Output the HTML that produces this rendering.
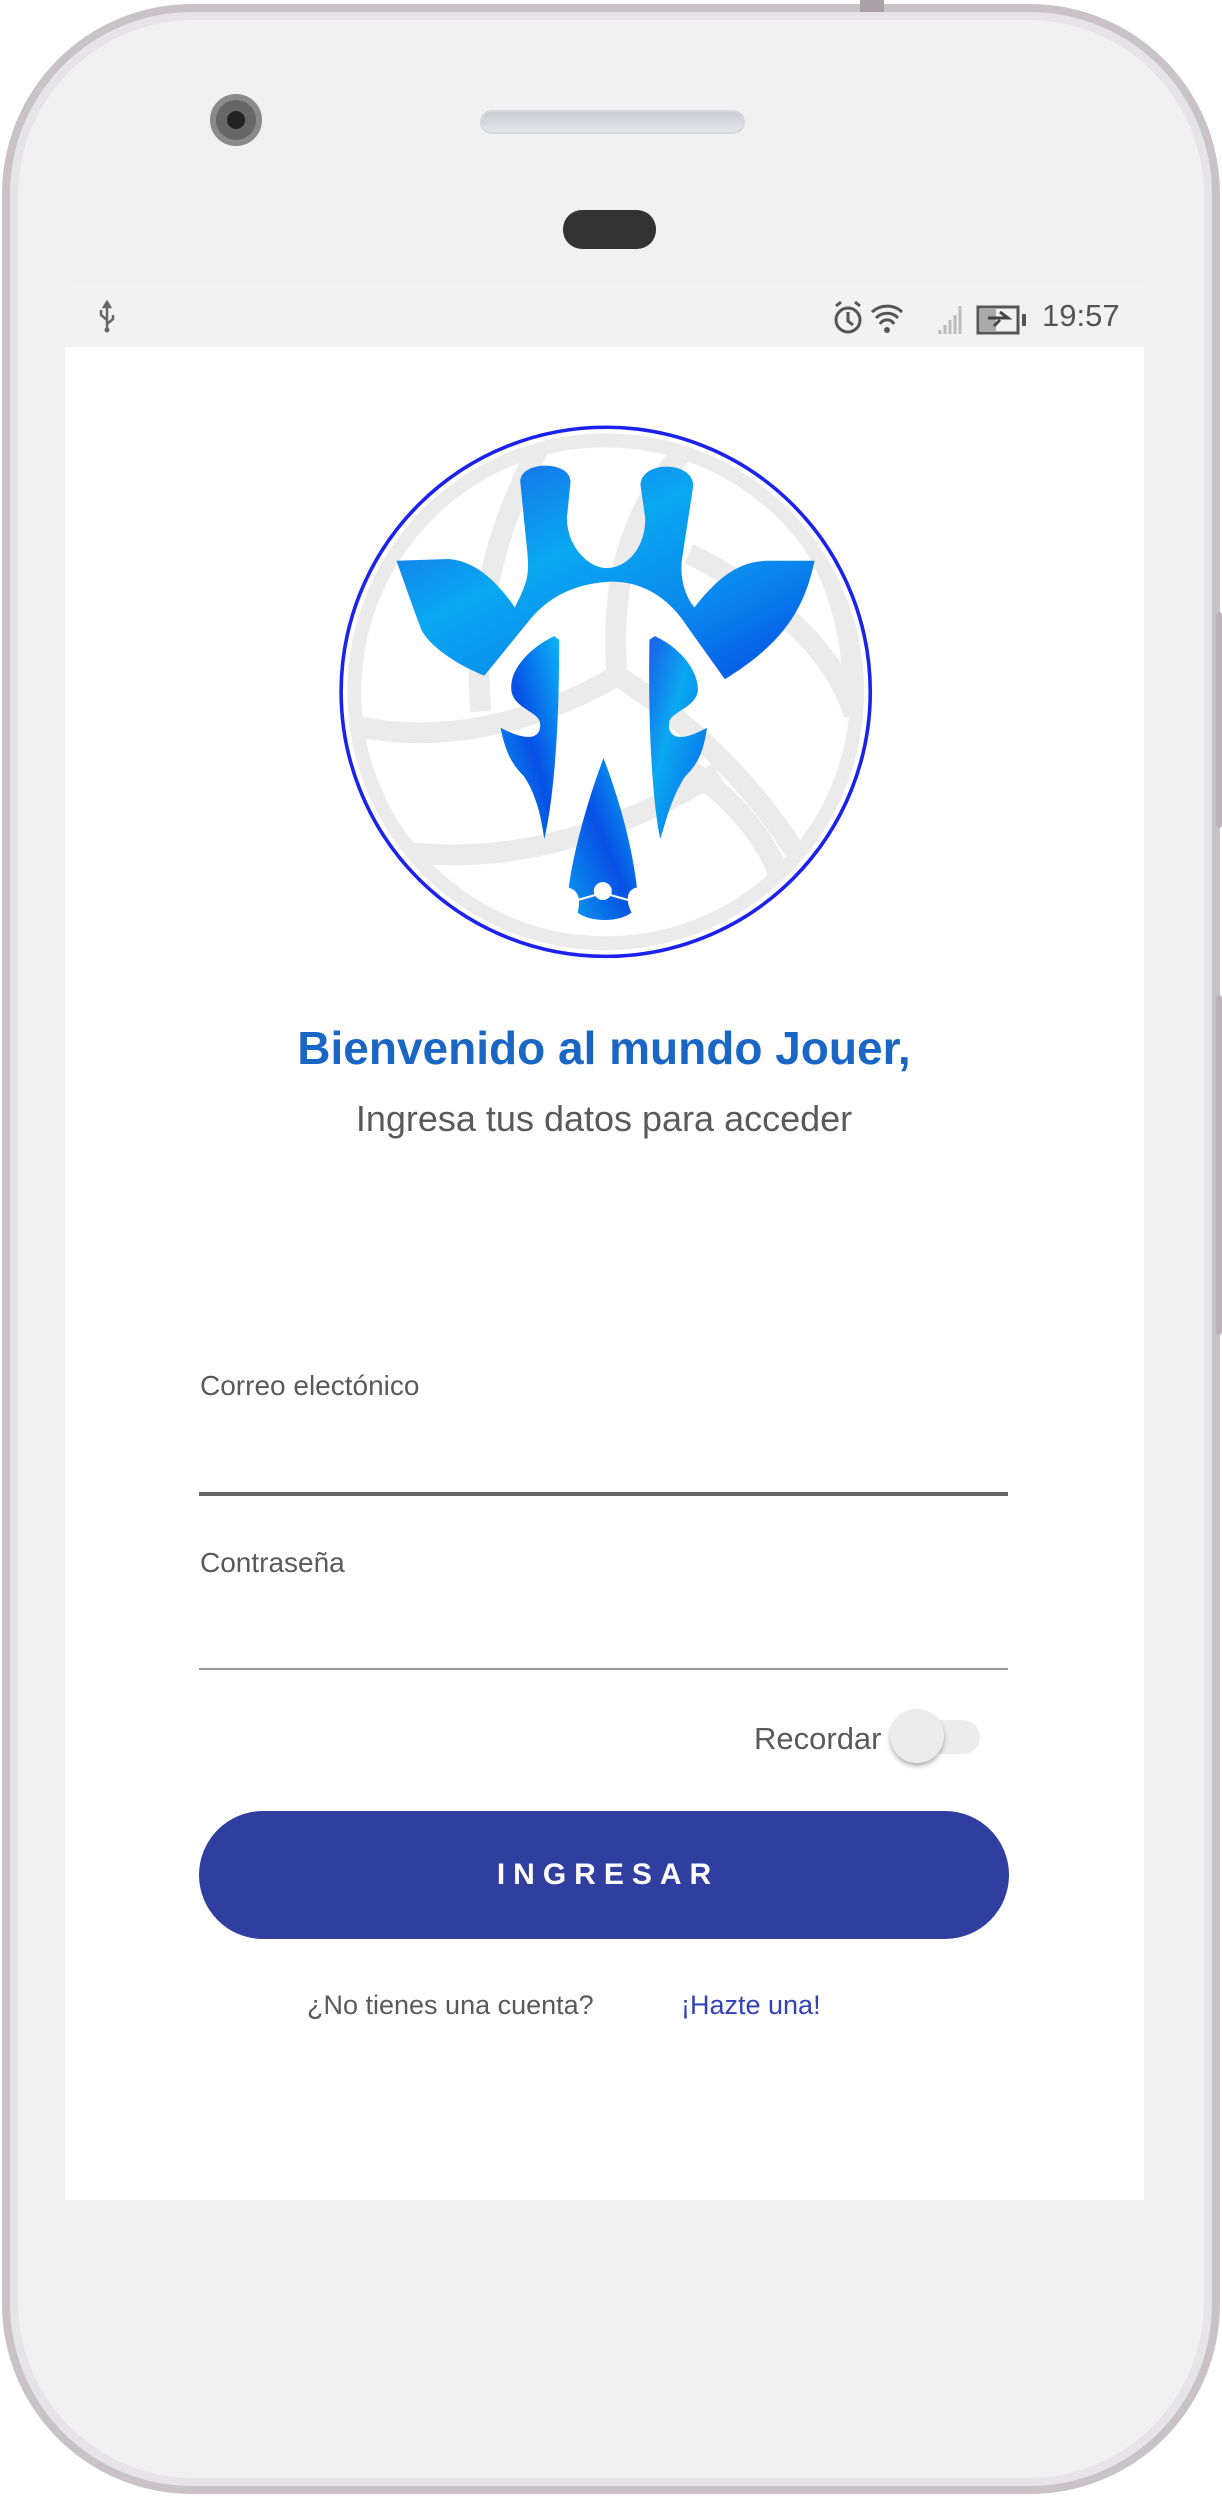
<!DOCTYPE html>
<html><head><meta charset="utf-8"><style>
*{margin:0;padding:0;box-sizing:border-box}
body{width:1222px;height:2498px;background:#fff;position:relative;overflow:hidden;font-family:"Liberation Sans",sans-serif}
.abs{position:absolute}
.frame{left:2px;top:4px;width:1218px;height:2490px;border-radius:190px;background:#c9c2c6;}
.frame2{left:10px;top:12px;width:1202px;height:2474px;border-radius:182px;background:#e6e4e6}
.body{left:18px;top:20px;width:1186px;height:2458px;border-radius:176px;background:#f1f1f2}
.screen{left:65px;top:283px;width:1079px;height:1917px;background:#fff}
.status{left:65px;top:283px;width:1079px;height:64px;background:#f2f2f2}
.t{position:absolute;white-space:nowrap;color:#5a5a5a}
</style></head><body>
<div class="abs frame"></div>
<div class="abs frame2"></div>
<div class="abs body"></div>
<div class="abs" style="left:1216px;top:612px;width:6px;height:216px;background:#bbb3b7;border-radius:3px"></div>
<div class="abs" style="left:1216px;top:995px;width:6px;height:340px;background:#bbb3b7;border-radius:3px"></div>
<div class="abs" style="left:860px;top:0;width:24px;height:12px;background:#a9a1a5"></div>
<div class="abs" style="left:210px;top:94px;width:52px;height:52px;border-radius:50%;background:#666;border:6px solid #8a8a8a"></div>
<div class="abs" style="left:227px;top:111px;width:18px;height:18px;border-radius:50%;background:#222"></div>
<div class="abs" style="left:480px;top:110px;width:265px;height:24px;border-radius:12px;background:linear-gradient(#c9ccd2,#e3e5ea);border:2px solid #d6d8dc"></div>
<div class="abs" style="left:563px;top:210px;width:93px;height:39px;border-radius:19px;background:#333"></div>
<div class="abs screen"></div>
<div class="abs status"></div>
<svg class="abs" style="left:95px;top:300px" width="24" height="34" viewBox="0 0 24 34"><path d="M12 2v28M12 2l-3 5h6zM12 20l-6-5v-5M12 24l6-5v-4" stroke="#666" stroke-width="2.5" fill="none"/><circle cx="12" cy="30" r="2.5" fill="#666"/></svg>
<svg class="abs" style="left:830px;top:298px" width="210" height="40" viewBox="0 0 210 40">
<circle cx="18" cy="22" r="12" stroke="#555" stroke-width="3" fill="none"/><path d="M18 14v9l5 4M6 8l5-4M30 8l-5-4" stroke="#555" stroke-width="3" fill="none"/>
<path d="M42 14a22 22 0 0 1 30 0M46 20a15 15 0 0 1 22 0M50 26a8 8 0 0 1 14 0" stroke="#555" stroke-width="3" fill="none"/><circle cx="57" cy="32" r="3" fill="#555"/>
<path d="M110 36v-4M115 36v-9M120 36v-14M125 36v-19M130 36v-28" stroke="#bbb" stroke-width="3"/>
<rect x="148" y="9" width="40" height="26" stroke="#555" stroke-width="3" fill="none"/><rect x="150" y="11" width="16" height="22" fill="#aaa"/><rect x="192" y="16" width="4" height="12" fill="#555"/><path d="M158 20h20l-8-6M170 22l-6 6" stroke="#444" stroke-width="3" fill="none"/>
</svg>
<div class="t" style="left:1042px;top:298px;font-size:31px;color:#555">19:57</div>
<svg class="abs" style="left:330px;top:410px" width="560" height="550" viewBox="0 0 1560 1532">
<defs>
<linearGradient id="g" x1="0" y1="0" x2="1" y2="1"><stop offset="0" stop-color="#1a5ee8"/><stop offset=".4" stop-color="#0aa8f0"/><stop offset=".7" stop-color="#0a86ee"/><stop offset="1" stop-color="#0448e0"/></linearGradient>
<linearGradient id="g2" x1="1" y1="0" x2="0" y2="1"><stop offset="0" stop-color="#0ab6f8"/><stop offset=".5" stop-color="#0750e4"/><stop offset="1" stop-color="#0a9cf0"/></linearGradient>
<clipPath id="c"><circle cx="768" cy="785" r="720"/></clipPath>
</defs>
<circle cx="768" cy="785" r="737" fill="#fff" stroke="#1b22ee" stroke-width="10"/>
<g clip-path="url(#c)" stroke="#ebebeb" stroke-width="58" fill="none">
<circle cx="768" cy="785" r="710"/>
<path d="M70 880C300 930 560 880 800 740C1050 900 1300 1150 1430 1500"/>
<path d="M200 1230C500 1270 800 1180 1080 1010"/>
<path d="M800 740C780 500 830 280 990 110"/>
<path d="M420 840C400 600 450 350 580 110"/>
<path d="M1000 400C1200 500 1400 650 1460 850"/>
<path d="M1000 1000C1150 1100 1260 1250 1270 1380"/>
<path d="M990 110C1250 180 1450 400 1460 800"/>
</g>
<path fill="url(#g)" d="M530 200C530 140 670 140 670 200L660 300C660 380 720 440 770 440C830 440 880 380 878 300L865 210C865 140 1010 140 1012 210L980 420C975 470 990 520 1015 550C1070 480 1130 420 1220 420L1350 420C1320 560 1260 650 1100 750L1000 610C950 530 880 480 790 478C700 480 620 510 560 580L430 740C330 700 260 640 250 600C220 520 200 460 185 420L330 415C400 420 460 470 515 550C550 480 555 460 550 400Z"/>
<path fill="url(#g2)" d="M625 630C560 660 500 720 505 780C510 830 580 840 585 870C590 910 560 930 475 885C490 960 510 990 540 1020C580 1080 590 1150 597 1195C620 1100 640 900 638 640Z"/>
<path fill="url(#g)" d="M905 630C970 660 1025 720 1025 780C1020 830 950 840 945 870C940 910 970 930 1050 885C1040 960 1020 990 990 1020C950 1080 935 1150 920 1195C900 1100 885 900 890 640Z"/>
<path fill="url(#g2)" d="M762 970C720 1080 680 1220 665 1330C690 1340 700 1355 690 1400C720 1425 800 1430 840 1400C820 1360 830 1335 855 1330C840 1200 800 1070 762 970Z"/>
<circle cx="760" cy="1340" r="25" fill="#fff"/>
<path d="M690 1365L760 1345L830 1365" stroke="#fff" stroke-width="6" fill="none"/>
</svg>
<div class="t" style="left:0;width:1208px;text-align:center;top:1021px;font-size:46px;font-weight:bold;color:#1a66c4">Bienvenido al mundo Jouer,</div>
<div class="t" style="left:0;width:1208px;text-align:center;top:1098px;font-size:36px;color:#5a5a5a">Ingresa tus datos para acceder</div>
<div class="t" style="left:200px;top:1370px;font-size:28px">Correo electónico</div>
<div class="abs" style="left:199px;top:1492px;width:809px;height:4px;background:#666"></div>
<div class="t" style="left:200px;top:1547px;font-size:28px">Contraseña</div>
<div class="abs" style="left:199px;top:1668px;width:809px;height:2px;background:#999"></div>
<div class="t" style="left:754px;top:1721px;font-size:31px">Recordar</div>
<div class="abs" style="left:905px;top:1720px;width:75px;height:34px;border-radius:17px;background:#ececec"></div>
<div class="abs" style="left:890px;top:1709px;width:54px;height:54px;border-radius:50%;background:#ececec;box-shadow:0 3px 5px rgba(0,0,0,.3)"></div>
<div class="abs" style="left:199px;top:1811px;width:810px;height:128px;border-radius:64px;background:#303f9f"></div>
<div class="t" style="left:203px;width:810px;text-align:center;top:1858px;font-size:30px;font-weight:bold;color:#fff;letter-spacing:8px">INGRESAR</div>
<div class="t" style="left:307px;top:1990px;font-size:27px">¿No tienes una cuenta?</div>
<div class="t" style="left:681px;top:1990px;font-size:27px;color:#3342b8">¡Hazte una!</div>
</body></html>
